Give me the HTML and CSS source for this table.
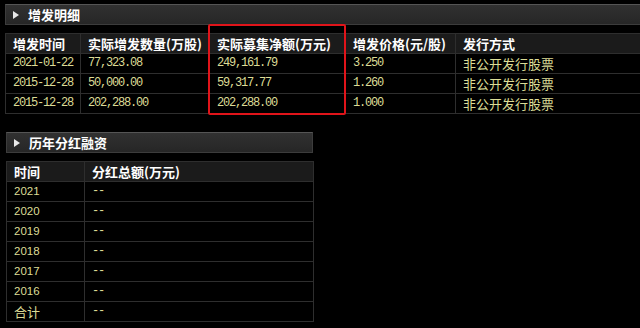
FILE: index.html
```html
<!DOCTYPE html>
<html>
<head>
<meta charset="utf-8">
<link rel="stylesheet" href="styles.css">
</head>
<body>
<section class="sec sec1">
  <div class="titlebar"><span class="tri"></span><span class="ttl">增发明细</span></div>
  <table class="grid g1">
    <colgroup><col class="c1"><col class="c2"><col class="c3"><col class="c4"><col class="c5"></colgroup>
    <tr class="hd"><th>增发时间</th><th>实际增发数量(万股)</th><th>实际募集净额(万元)</th><th>增发价格(元/股)</th><th>发行方式</th></tr>
    <tr><td class="num">2021-01-22</td><td class="num">77,323.08</td><td class="num">249,161.79</td><td class="num">3.250</td><td class="cn">非公开发行股票</td></tr>
    <tr><td class="num">2015-12-28</td><td class="num">50,000.00</td><td class="num">59,317.77</td><td class="num">1.260</td><td class="cn">非公开发行股票</td></tr>
    <tr><td class="num">2015-12-28</td><td class="num">202,288.00</td><td class="num">202,288.00</td><td class="num">1.000</td><td class="cn">非公开发行股票</td></tr>
  </table>
  <div class="redbox"></div>
</section>
<section class="sec sec2">
  <div class="titlebar"><span class="tri"></span><span class="ttl">历年分红融资</span></div>
  <table class="grid g2">
    <colgroup><col class="d1"><col class="d2"></colgroup>
    <tr class="hd"><th>时间</th><th>分红总额(万元)</th></tr>
    <tr><td class="yr">2021</td><td class="dash">--</td></tr>
    <tr><td class="yr">2020</td><td class="dash">--</td></tr>
    <tr><td class="yr">2019</td><td class="dash">--</td></tr>
    <tr><td class="yr">2018</td><td class="dash">--</td></tr>
    <tr><td class="yr">2017</td><td class="dash">--</td></tr>
    <tr><td class="yr">2016</td><td class="dash">--</td></tr>
    <tr><td class="cn">合计</td><td class="dash">--</td></tr>
  </table>
</section>
</body>
</html>
```
FILE: styles.css
```css
html, body { margin: 0; padding: 0; background: #000; }
body { width: 640px; height: 328px; overflow: hidden; font-family: "Noto Sans CJK SC", "Liberation Sans", sans-serif; }
.sec { position: relative; }
.sec1 { margin: 4px 0 0 5px; width: 635px; }
.sec2 { margin: 18px 0 0 6px; width: 307px; }
.titlebar {
  height: 19px;
  border: 1px solid #3c3c3c;
  border-top-color: #555;
  background: linear-gradient(#313131, #262626);
  display: flex; align-items: center;
  box-sizing: content-box;
}
.sec1 .titlebar { border-right: none; }
.tri {
  width: 0; height: 0;
  border-left: 6px solid #e8e8e8;
  border-top: 4px solid transparent;
  border-bottom: 4px solid transparent;
  margin-left: 7px; margin-right: 9px;
}
.ttl { color: #fff; font-weight: bold; font-size: 13px; line-height: 19px; }
.grid { border-collapse: collapse; table-layout: fixed; margin-top: 8px; }
.g1 { width: 635px; }
.g2 { width: 307px; margin-top: 8px; }
.c1 { width: 75px; } .c2 { width: 129px; } .c3 { width: 136px; } .c4 { width: 110px; } .c5 { width: 185px; }
.d1 { width: 78px; } .d2 { width: 229px; }
.grid th, .grid td {
  height: 19px; padding: 0 0 0 7px; border: 1px solid #2e2e2e; text-align: left;
  white-space: nowrap; overflow: hidden; line-height: 19px;
}
.g1 tr > :last-child { border-right: none; }
.hd th { background: #1b1b1b; color: #fff; font-weight: bold; font-size: 13px; }
.num { color: #dcdc96; font-family: "Liberation Mono", monospace; font-size: 12px; letter-spacing: -1.2px; }
.cn { color: #dcdc96; font-size: 13px; }
.yr { color: #dcdc96; font-family: "Liberation Sans", sans-serif; font-size: 11.5px; }
.dash { color: #dcdc96; font-family: "Liberation Mono", monospace; font-size: 12px; letter-spacing: -1.2px; }
.redbox {
  position: absolute; left: 203px; top: 20px; width: 134px; height: 87px;
  border: 2px solid #e0141a; border-radius: 2px;
}
```
